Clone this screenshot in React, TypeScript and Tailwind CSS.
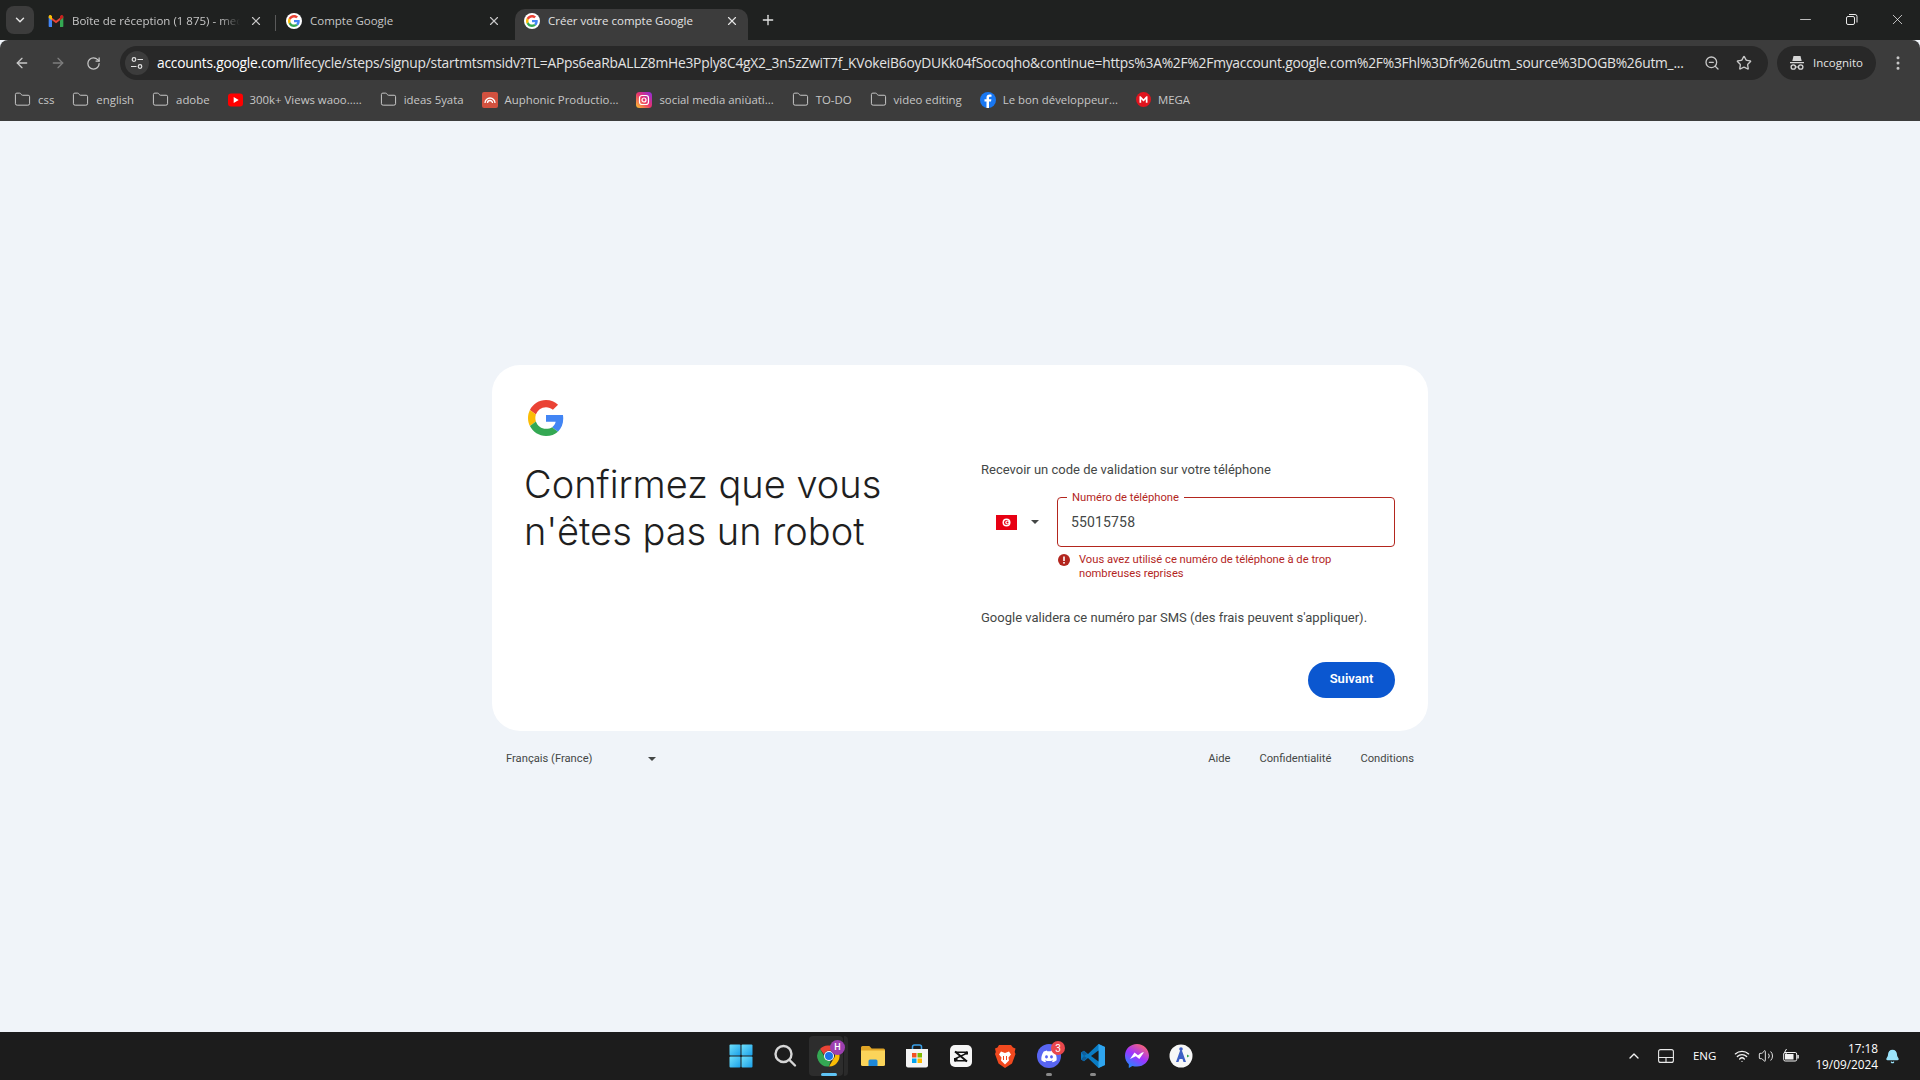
import React from "react";
import { ArrowLeft, ArrowRight, RotateCw, X, Plus, ChevronDown, ChevronUp, Folder, Star, ZoomOut, EllipsisVertical, Minus, Wifi, Volume2, Bell } from "lucide-react";

function GoogleG({ size = 36 }: { size?: number }) {
  return (
    <svg width={size} height={size} viewBox="0 0 48 48" className="block shrink-0">
      <path fill="#EA4335" d="M24 9.5c3.54 0 6.71 1.22 9.21 3.6l6.85-6.85C35.9 2.38 30.47 0 24 0 14.62 0 6.51 5.38 2.56 13.22l7.98 6.19C12.43 13.72 17.74 9.5 24 9.5z" />
      <path fill="#4285F4" d="M46.98 24.55c0-1.57-.15-3.09-.38-4.55H24v9.02h12.94c-.58 2.96-2.26 5.48-4.78 7.18l7.73 6c4.51-4.18 7.09-10.36 7.09-17.65z" />
      <path fill="#FBBC05" d="M10.53 28.59c-.48-1.45-.76-2.99-.76-4.59s.27-3.14.76-4.59l-7.98-6.19C.92 16.46 0 20.12 0 24c0 3.88.92 7.54 2.56 10.78l7.97-6.19z" />
      <path fill="#34A853" d="M24 48c6.48 0 11.93-2.13 15.89-5.81l-7.73-6c-2.15 1.45-4.92 2.3-8.16 2.3-6.26 0-11.57-4.22-13.47-9.91l-7.98 6.19C6.51 42.62 14.62 48 24 48z" />
    </svg>
  );
}

function GFav() {
  return (
    <span className="flex h-4 w-4 shrink-0 items-center justify-center rounded-full bg-white">
      <GoogleG size={12} />
    </span>
  );
}

function Gmail() {
  return (
    <svg width="16" height="16" viewBox="0 0 24 24" className="shrink-0">
      <path fill="#4285F4" d="M1 5v15a1 1 0 0 0 1 1h4V11z" />
      <path fill="#34A853" d="M23 5v15a1 1 0 0 1-1 1h-4V11z" />
      <path fill="#EA4335" d="M6 7 12 11.5 18 7v4l-6 4.5L6 11z" />
      <path fill="#FBBC05" d="M1 5.5C1 3.5 3.2 2.4 4.8 3.6L6 4.5V11L1 7.2z" />
      <path fill="#C5221F" d="M23 5.5c0-2-2.2-3.1-3.8-1.9L18 4.5V11l5-3.8z" />
    </svg>
  );
}

function Tab({ icon, title, fade }: { icon: React.ReactNode; title: string; fade?: boolean }) {
  return (
    <div className="flex h-[31px] w-[238px] items-center gap-[8px] pb-[7px] pl-[10px] pr-[12px]">
      {icon}
      <span className={`min-w-0 flex-1 whitespace-nowrap text-[11.5px] text-[#c7c7c7] ${fade ? "overflow-hidden [mask-image:linear-gradient(to_right,black_88%,transparent)]" : ""}`}>{title}</span>
      <X size={14} strokeWidth={2} color="#c7c7c7" className="mx-px shrink-0" />
    </div>
  );
}

function FolderItem({ label }: { label: string }) {
  return <BM icon={<Folder size={17} strokeWidth={1.4} color="#c7c7c7" />} label={label} />;
}

function BM({ icon, label }: { icon: React.ReactNode; label: string }) {
  return (
    <div className="flex items-center gap-[7px] whitespace-nowrap text-[11.4px] text-[#c7c7c7]">
      {icon}
      <span>{label}</span>
    </div>
  );
}

function Caret({ w = 8 }: { w?: number }) {
  return (
    <svg width={w} height={w / 2} viewBox="0 0 10 5" className="block shrink-0">
      <path d="M0 0h10L5 5z" fill="#444746" />
    </svg>
  );
}

function TaskIcons() {
  return (
    <div className="ml-[2px] flex h-12 items-center gap-[20px]">
      <svg width="24" height="24" viewBox="0 0 24 24" className="shrink-0">
        <defs>
          <linearGradient id="w" x1="0" y1="0" x2="1" y2="1"><stop offset="0" stopColor="#6fe0fb" /><stop offset="1" stopColor="#1a9fe8" /></linearGradient>
        </defs>
        <rect x="0.5" y="0.5" width="11" height="11" rx="1" fill="url(#w)" />
        <rect x="12.5" y="0.5" width="11" height="11" rx="1" fill="url(#w)" />
        <rect x="0.5" y="12.5" width="11" height="11" rx="1" fill="url(#w)" />
        <rect x="12.5" y="12.5" width="11" height="11" rx="1" fill="url(#w)" />
      </svg>
      <svg width="24" height="24" viewBox="0 0 24 24" className="shrink-0" fill="none" stroke="#d6d6d6" strokeWidth="2.4" strokeLinecap="round">
        <circle cx="10.5" cy="10" r="8" />
        <path d="M16.5 16 22 21.5" />
      </svg>
      <div className="relative flex h-[40px] w-[24px] shrink-0 items-center justify-center">
        <div className="absolute -left-[8px] top-0 h-[40px] w-[34px] rounded-[4px] bg-[#2d2d2d]" />
        <div className="absolute -right-[7px] top-0 h-[40px] w-[4px] rounded-r-[4px] bg-[#2a2a2a]" />
        <svg width="24" height="24" viewBox="0 0 48 48" className="relative">
          <path fill="#EA4335" d="M24 3a21 21 0 0 1 18.2 10.5H24a10.5 10.5 0 0 0-10 7.3L6 9.9A21 21 0 0 1 24 3z" />
          <path fill="#FBBC05" d="M42.2 13.5A21 21 0 0 1 24 45l9.1-15.7a10.5 10.5 0 0 0-.9-15.8z" />
          <path fill="#34A853" d="M24 45A21 21 0 0 1 6 9.9l9 15.6a10.5 10.5 0 0 0 12 8z" />
          <circle cx="24" cy="24" r="10" fill="#fff" />
          <circle cx="24" cy="24" r="8" fill="#1a73e8" />
        </svg>
        <span className="absolute -right-[4px] top-[4px] flex h-[15px] w-[15px] items-center justify-center rounded-full bg-[#9c3fb0] font-['Roboto',sans-serif] text-[9px] font-medium text-white">H</span>
        <span className="absolute bottom-0 left-[4px] h-[3px] w-[16px] rounded-full bg-[#5fc4f5]" />
      </div>
      <svg width="24" height="24" viewBox="0 0 24 24" className="shrink-0">
        <path d="M0 3.5A1.5 1.5 0 0 1 1.5 2h6.8l2.4 2.5h11.8A1.5 1.5 0 0 1 24 6v3H0z" fill="#e0a526" />
        <path d="M0 6.5h24v14A1.5 1.5 0 0 1 22.5 22h-21A1.5 1.5 0 0 1 0 20.5z" fill="#fbd45a" />
        <path d="M7.5 17A1.500 1.500 0 0 1 9 15.5h6a1.500 1.500 0 0 1 1.500 1.500v5h-9z" fill="#1e88d8" />
      </svg>
      <svg width="24" height="24" viewBox="0 0 24 24" className="shrink-0">
        <path d="M7.5 5V3a2 2 0 0 1 2-2h5a2 2 0 0 1 2 2v2" stroke="#3aa0e8" strokeWidth="1.5" fill="none" />
        <path d="M1 5h22v16.500a2 2 0 0 1-2 2H3a2 2 0 0 1-2-2z" fill="#f4f4f4" />
        <rect x="7" y="9" width="4.5" height="4.5" fill="#f25022" />
        <rect x="12.5" y="9" width="4.5" height="4.5" fill="#7fba00" />
        <rect x="7" y="14.5" width="4.5" height="4.5" fill="#00a4ef" />
        <rect x="12.5" y="14.5" width="4.5" height="4.5" fill="#ffb900" />
      </svg>
      <svg width="24" height="24" viewBox="0 0 24 24" className="shrink-0">
        <rect x="1" y="1" width="22" height="22" rx="5" fill="#f5f5f5" />
        <path d="M6 7.5h12v2.500L8.500 14.500V16H18v1.500H6V14l9.500-4.500V9H6z" fill="#111" />
        <path d="M6 7.5 18 17.500M18 7.500v3M6 14v3.500" stroke="#111" strokeWidth="2" fill="none" />
      </svg>
      <svg width="24" height="24" viewBox="0 0 24 24" className="shrink-0">
        <path d="M6 1h12l2 2.500 2.500 1-.8 3.500.8 2-3.500 9.500L12 24l-6.500-4.500L2 10l.8-2L2 4.500l2.500-1z" fill="#f1491f" />
        <path d="M8 7.5 12 9l4-1.500 2 3-2.500 3 .5 3-4 4-4-4 .5-3L6 10.500z" fill="#fff" />
        <path d="M10 12h1v4h-1zM13 12h1v4h-1z" fill="#f1491f" />
      </svg>
      <div className="relative h-6 w-6 shrink-0">
        <svg width="24" height="24" viewBox="0 0 24 24">
          <circle cx="12" cy="12" r="12" fill="#5865f2" />
          <path d="M17.3 7.5a13 13 0 0 0-3.200-1l-.4.800a12 12 0 0 0-3.400 0l-.4-.8a13 13 0 0 0-3.200 1C4.700 10.500 4.100 13.400 4.400 16.300a13 13 0 0 0 3.900 2l.8-1.300-1.300-.6.300-.2a9.300 9.300 0 0 0 7.800 0l.3.200-1.300.6.800 1.300a13 13 0 0 0 3.900-2c.4-3.400-.6-6.200-2.300-8.800zM9.500 14.400c-.8 0-1.400-.7-1.400-1.600s.6-1.600 1.400-1.600 1.400.7 1.400 1.600-.6 1.600-1.400 1.600zm5 0c-.8 0-1.400-.7-1.400-1.600s.6-1.600 1.400-1.600 1.400.7 1.400 1.600-.6 1.600-1.400 1.600z" fill="#fff" />
        </svg>
        <span className="absolute -right-[4px] -top-[3px] flex h-[14px] w-[14px] items-center justify-center rounded-full bg-[#e8474c] font-['Roboto',sans-serif] text-[10px] text-white">3</span>
        <span className="absolute -bottom-[8px] left-[9px] h-[3px] w-[6px] rounded-full bg-[#8a8a8a]" />
      </div>
      <div className="relative h-6 w-6 shrink-0">
        <svg width="24" height="24" viewBox="0 0 24 24">
          <path d="M17.5 0 24 3v18l-6.500 3L7 14l-4 3.200L0 15.500v-7l3-1.700L7 10z" fill="#0a7cc4" />
          <path d="M17.5 0 24 3v18l-6.500 3z" fill="#2fa5ee" />
          <path d="M17.5 6.500 10 12l7.500 5.500z" fill="#1c1c1c" />
          <path d="M0 8.500 3 6.800 6 10 3 12zM0 15.500 3 17.200 6 14 3 12z" fill="#0f5f9c" />
        </svg>
        <span className="absolute -bottom-[8px] left-[9px] h-[3px] w-[6px] rounded-full bg-[#8a8a8a]" />
      </div>
      <svg width="24" height="24" viewBox="0 0 24 24" className="shrink-0">
        <defs>
          <linearGradient id="m" x1="0.2" y1="1" x2="0.8" y2="0"><stop offset="0" stopColor="#1e8cff" /><stop offset="0.5" stopColor="#a033ff" /><stop offset="1" stopColor="#ff6968" /></linearGradient>
        </defs>
        <path d="M12 0C5.200 0 0 5 0 11.700c0 3.500 1.400 6.500 3.800 8.600V24l3.600-2c1.400.4 3 .6 4.600.6 6.800 0 12-5 12-11S18.800 0 12 0z" fill="url(#m)" />
        <path d="m5 15 4.500-6.500 3.500 2.700 4-2.700 2-.2-4.700 6.700-3.500-2.700z" fill="#fff" />
      </svg>
      <svg width="24" height="24" viewBox="0 0 24 24" className="shrink-0">
        <circle cx="12" cy="12" r="11.5" fill="#f7f7f7" />
        <path d="M12 4 7 18h2.500l1-3h3l1 3H17z" fill="#3d5fc4" />
        <circle cx="12" cy="5" r="1.8" fill="#3d5fc4" />
        <path d="M18 10.500l2.500 1.500-2.500 1.500z" fill="#35a853" />
      </svg>
    </div>
  );
}

export default function App() {
  return (
    <div className="flex h-[1080px] w-[1920px] flex-col overflow-hidden bg-[#f0f4f9] font-['Roboto',sans-serif]">
      {/* Tab strip */}
      <div className="flex h-10 shrink-0 items-end bg-[#1f2120] pl-[6px] font-['Open_Sans',sans-serif]">
        <div className="mb-[6px] mr-1 flex h-7 w-7 items-center justify-center rounded-lg bg-[#3c3c3c]">
          <ChevronDown size={14} strokeWidth={2.5} color="#e3e3e3" />
        </div>
        <Tab icon={<Gmail />} title="Boîte de réception (1 875) - mec" fade />
        <div className="relative">
          <div className="absolute -left-px top-[6px] h-[16px] w-px bg-[#5a5a5a]" />
          <Tab icon={<GFav />} title="Compte Google" />
        </div>
        <div className="ml-px flex h-[31px] w-[233px] items-center gap-[8px] rounded-t-[10px] bg-[#3c3c3c] pb-[7px] pl-[9px] pr-[8px]">
          <GFav />
          <span className="min-w-0 flex-1 whitespace-nowrap text-[11.5px] text-[#e3e3e3]">Créer votre compte Google</span>
          <X size={14} strokeWidth={2} color="#e3e3e3" className="mx-px shrink-0" />
        </div>
        <div className="mb-[6px] ml-[12px] flex h-7 items-center">
          <Plus size={16} strokeWidth={2} color="#e3e3e3" />
        </div>
        <div className="flex-1" />
        <div className="mb-[12px] flex items-center gap-[29px] pr-[14px]">
          <Minus size={17} strokeWidth={1} color="#fff" />
          <svg width="17" height="17" viewBox="0 0 17 17" fill="none" stroke="#e8e8e8" strokeWidth="1">
            <rect x="3.5" y="5.5" width="8" height="8" rx="1.5" />
            <path d="M6 3.5h6a2 2 0 0 1 2 2v6" />
          </svg>
          <X size={17} strokeWidth={1} color="#fff" />
        </div>
      </div>

      {/* Toolbar */}
      <div className="flex h-10 shrink-0 items-start rounded-t-lg bg-[#3c3c3c] pt-[6px] font-['Open_Sans',sans-serif]">
        <div className="flex h-[34px] w-[120px] items-center gap-[20px] pl-[14px]">
          <ArrowLeft size={16} strokeWidth={2} color="#c7c7c7" />
          <ArrowRight size={16} strokeWidth={2} color="#7d7d7d" />
          <RotateCw size={15} strokeWidth={2} color="#c7c7c7" />
        </div>
        <div className="flex h-[34px] w-[1648px] items-center rounded-full bg-[#282828] pl-[5px] pr-[16px]">
          <div className="flex h-6 w-6 shrink-0 items-center justify-center rounded-full bg-[#3c3c3c]">
            <svg width="14" height="14" viewBox="0 0 14 14" fill="none" stroke="#e3e3e3" strokeWidth="1.2">
              <circle cx="4" cy="3.5" r="1.8" />
              <path d="M7.500 3.500H13M1 10.500h5.500" />
              <circle cx="10" cy="10.5" r="1.8" />
            </svg>
          </div>
          <span className="ml-2 min-w-0 flex-1 whitespace-nowrap text-[13.8px] tracking-[-0.23px] text-[#e3e3e3]">
            <span className="text-white">accounts.google.com</span>/lifecycle/steps/signup/startmtsmsidv?TL=APps6eaRbALLZ8mHe3Pply8C4gX2_3n5zZwiT7f_KVokeiB6oyDUKk04fSocoqho&amp;continue=https%3A%2F%2Fmyaccount.google.com%2F%3Fhl%3Dfr%26utm_source%3DOGB%26utm_...
          </span>
          <ZoomOut size={16} strokeWidth={2} color="#c7c7c7" className="ml-[20px] shrink-0" />
          <Star size={16} strokeWidth={2} color="#c7c7c7" className="ml-[16px] shrink-0" />
        </div>
        <div className="ml-[9px] flex h-[34px] w-[99px] items-center gap-[8px] rounded-full bg-[#282828] pl-[12px]">
          <svg width="16" height="16" viewBox="0 0 16 16" fill="#d6d6d6" className="shrink-0">
            <path d="M4.500 1h7l1.200 5H3.300zM1 7h14v1.200H1z" />
            <circle cx="4.3" cy="12" r="2.2" fill="none" stroke="#d6d6d6" strokeWidth="1.3" />
            <circle cx="11.7" cy="12" r="2.2" fill="none" stroke="#d6d6d6" strokeWidth="1.3" />
            <path d="M6.500 11.500h3v1h-3z" />
          </svg>
          <span className="whitespace-nowrap text-[11.5px] text-[#e3e3e3]">Incognito</span>
        </div>
        <EllipsisVertical size={18} strokeWidth={2} color="#c7c7c7" className="ml-[13px] mt-2" />
      </div>

      {/* Bookmarks */}
      <div className="flex h-[41px] shrink-0 items-center gap-[18px] bg-[#3c3c3c] pb-[1px] pl-[14px] font-['Open_Sans',sans-serif]">
        <FolderItem label="css" />
        <FolderItem label="english" />
        <FolderItem label="adobe" />
        <BM
          icon={
            <svg width="15" height="16" viewBox="0 0 15 16" className="shrink-0">
              <rect y="1.5" width="15" height="13" rx="3" fill="#f00" />
              <path d="M5.700 5v6l5-3z" fill="#fff" />
            </svg>
          }
          label="300k+ Views waoo....."
        />
        <FolderItem label="ideas 5yata" />
        <BM
          icon={
            <svg width="16" height="16" viewBox="0 0 16 16" className="shrink-0" fill="none">
              <rect width="16" height="16" rx="2" fill="#d2513f" />
              <path d="M3 11a5 5 0 0 1 10 0M5.500 11a2.500 2.500 0 0 1 5 0" stroke="#fff" strokeWidth="1.3" />
            </svg>
          }
          label="Auphonic Productio..."
        />
        <BM
          icon={
            <svg width="16" height="16" viewBox="0 0 16 16" className="shrink-0" fill="none">
              <defs>
                <linearGradient id="ig" x1="0" y1="1" x2="1" y2="0"><stop offset="0" stopColor="#fdc82f" /><stop offset="0.5" stopColor="#e8336d" /><stop offset="1" stopColor="#8a2be2" /></linearGradient>
              </defs>
              <rect width="16" height="16" rx="3.5" fill="url(#ig)" />
              <rect x="3.5" y="3.5" width="9" height="9" rx="2.5" stroke="#fff" strokeWidth="1.2" />
              <circle cx="8" cy="8" r="2" stroke="#fff" strokeWidth="1.2" />
            </svg>
          }
          label="social media aniùati..."
        />
        <FolderItem label="TO-DO" />
        <FolderItem label="video editing" />
        <BM
          icon={
            <svg width="16" height="16" viewBox="0 0 16 16" className="shrink-0">
              <circle cx="8" cy="8" r="8" fill="#1877f2" />
              <path d="M9 16V9.500h2l.4-2.300H9V6c0-.7.300-1.200 1.300-1.200h1.200V2.800c-.5-.1-1.200-.2-1.900-.2-1.900 0-3.100 1.100-3.100 3.100v1.500H4.500v2.300h2V16z" fill="#fff" />
            </svg>
          }
          label="Le bon développeur..."
        />
        <BM
          icon={
            <svg width="15" height="15" viewBox="0 0 15 15" className="shrink-0">
              <circle cx="7.5" cy="7.5" r="7.5" fill="#e0141e" />
              <path d="M3.500 10.800V4.200h1.200l2.800 3 2.800-3h1.200v6.600H9.800V7.200L7.500 9.600 5.200 7.200v3.600z" fill="#fff" />
            </svg>
          }
          label="MEGA"
        />
      </div>

      {/* Page */}
      <div className="flex min-h-0 flex-1 flex-col items-center bg-[#f0f4f9] pt-[244px]">
        <div className="flex h-[366px] w-[936px] rounded-[28px] bg-white pl-[34px] pr-[33px]">
          <div className="w-[455px] shrink-0 pt-[35px]">
            <div className="pl-[2px]">
              <GoogleG size={36} />
            </div>
            <h1 className="-ml-[2px] mt-[25px] whitespace-nowrap font-['Inter',sans-serif] text-[38px] font-light leading-[47px] text-[#1f1f1f]">
              Confirmez que vous
              <br />
              n'êtes pas un robot
            </h1>
          </div>
          <div className="flex min-w-0 flex-1 flex-col pt-[96px]">
            <p className="h-[18px] whitespace-nowrap text-[13px] leading-[18px] text-[#444746]">Recevoir un code de validation sur votre téléphone</p>
            <div className="mt-[18px] flex items-center">
              <div className="flex w-[76px] items-center gap-[14px] pl-[15px]">
                <svg width="21" height="15" viewBox="0 0 21 15" className="shrink-0">
                  <rect width="21" height="15" fill="#e70013" />
                  <circle cx="10.5" cy="7.5" r="4" fill="#fff" />
                  <circle cx="10.5" cy="7.5" r="2.5" fill="#e70013" />
                  <circle cx="11.3" cy="7.5" r="2" fill="#fff" />
                  <circle cx="11.5" cy="7.5" r="1" fill="#e70013" />
                </svg>
                <Caret w={8} />
              </div>
              <div className="relative flex h-[50px] flex-1 items-center rounded-[4px] border border-[#b3261e] pl-[13px]">
                <span className="absolute -top-[7px] left-[9px] bg-white px-[5px] text-[11.2px] leading-[14px] text-[#b3261e]">Numéro de téléphone</span>
                <span className="text-[14px] tracking-[0.15px] text-[#444746]">55015758</span>
              </div>
            </div>
            <div className="ml-[77px] mt-[6px] flex gap-[9px]">
              <svg width="12" height="12" viewBox="0 0 12 12" className="mt-[1px] shrink-0">
                <circle cx="6" cy="6" r="6" fill="#b3261e" />
                <rect x="5.2" y="2.5" width="1.6" height="4.5" fill="#fff" />
                <rect x="5.2" y="8" width="1.6" height="1.6" fill="#fff" />
              </svg>
              <p className="w-[280px] text-[11.2px] leading-[14px] text-[#b3261e]">Vous avez utilisé ce numéro de téléphone à de trop nombreuses reprises</p>
            </div>
            <p className="mt-[28px] h-[18px] whitespace-nowrap text-[13px] leading-[18px] text-[#444746]">Google validera ce numéro par SMS (des frais peuvent s'appliquer).</p>
            <button className="mt-[35px] h-9 w-[87px] self-end rounded-full bg-[#0b57d0] pb-[2px] text-[13px] font-semibold text-white">Suivant</button>
          </div>
        </div>
        <div className="mt-[20px] flex w-[936px] items-center justify-between pl-[14px] pr-[14px] text-[11.2px] leading-4 text-[#444746]">
          <div className="flex w-[150px] items-center justify-between">
            <span>Français (France)</span>
            <Caret w={8} />
          </div>
          <div className="flex gap-[29px]">
            <span>Aide</span>
            <span>Confidentialité</span>
            <span>Conditions</span>
          </div>
        </div>
      </div>

      {/* Taskbar */}
      <div className="grid h-12 shrink-0 grid-cols-[1fr_auto_1fr] items-center bg-[#1c1c1c] font-['Open_Sans',sans-serif]">
        <div />
        <TaskIcons />
        <div className="flex items-center justify-end pr-[20px] text-white">
          <ChevronUp size={16} strokeWidth={2} color="#f2f2f2" />
          <svg width="16" height="14" viewBox="0 0 16 14" fill="none" stroke="#e8e8e8" strokeWidth="1.1" className="ml-[16px]">
            <rect x="0.6" y="0.6" width="14.8" height="12.8" rx="2" />
            <path d="M0.600 8.500h14.800M8 8.500v5" />
          </svg>
          <span className="ml-[19px] text-[11.5px] font-normal">ENG</span>
          <Wifi size={16} strokeWidth={2} color="#f2f2f2" className="ml-[18px]" />
          <Volume2 size={16} strokeWidth={1.4} color="#f2f2f2" className="ml-[8px]" />
          <svg width="16" height="14" viewBox="0 0 16 14" className="ml-[9px]" fill="none">
            <rect x="0.7" y="3.5" width="13" height="8.5" rx="1.5" stroke="#f2f2f2" />
            <rect x="2" y="5" width="8.5" height="5.500" fill="#f2f2f2" />
            <rect x="14.3" y="6" width="1.5" height="3.5" fill="#f2f2f2" />
            <path d="M3.500 0 1.500 3.500h2L2.500 6.500" stroke="#f2f2f2" />
          </svg>
          <div className="ml-[16px] text-right text-[11.8px] leading-[16px]">
            <div>17:18</div>
            <div>19/09/2024</div>
          </div>
          <Bell size={15} fill="#9be4fb" color="#9be4fb" className="ml-[7px]" />
        </div>
      </div>
    </div>
  );
}
